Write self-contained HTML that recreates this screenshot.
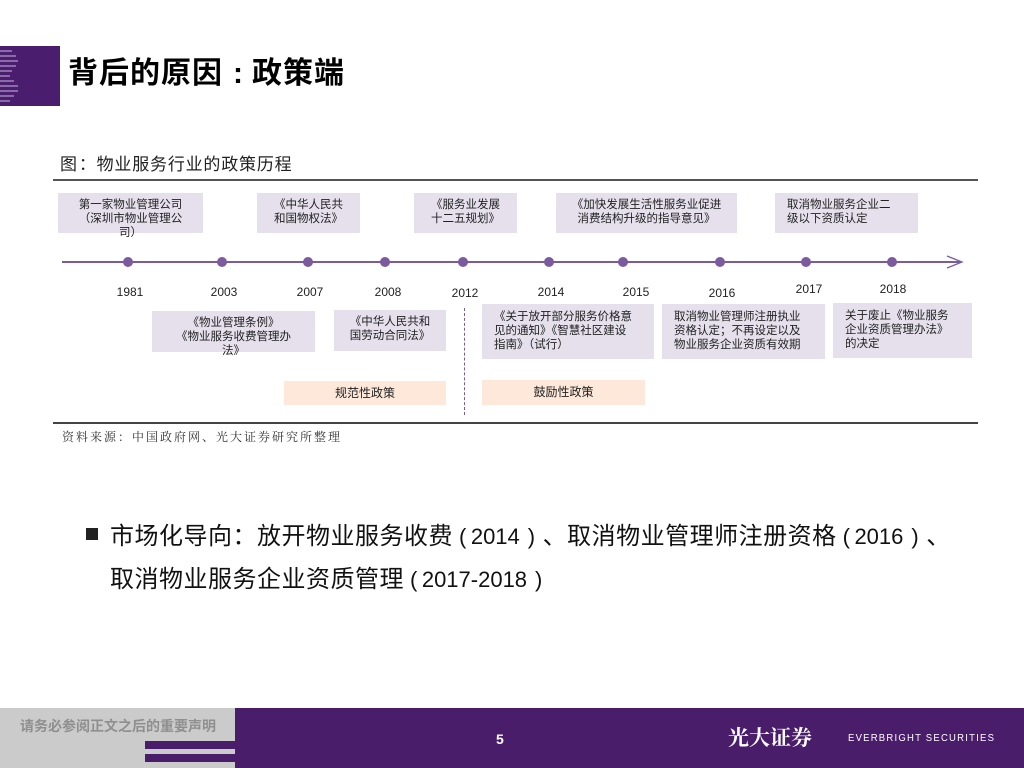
<!DOCTYPE html>
<html><head><meta charset="utf-8"><style>
*{margin:0;padding:0;box-sizing:border-box}
body{width:1024px;height:768px;background:#fff;position:relative;overflow:hidden;font-family:"Liberation Sans","Noto Sans CJK SC",sans-serif;color:#000}
.a{position:absolute}
.box{position:absolute;background:#e5e0ec;font-size:11.5px;line-height:14px;color:#222;text-align:center;padding-top:5px}
.or{position:absolute;background:#fde8da;font-size:12px;color:#222;text-align:center;line-height:25px}
.yr{position:absolute;font-size:12px;color:#222;width:40px;text-align:center}
.dot{position:absolute;width:10px;height:10px;border-radius:50%;background:#7b5a9e;top:257px}
.l{margin:0 4px 0 6px;font-size:22px}
.r{margin:0 7px 0 8px;font-size:22px}
.n{letter-spacing:0;font-size:22px}
</style></head><body>
<div class="a" style="left:0;top:46px;width:60px;height:60px;background:#4b1d6e"></div>
<svg class="a" style="left:0;top:46px" width="22" height="60">
<g fill="#8a6aa8"><rect x="0" y="4" width="12" height="2"/><rect x="0" y="9" width="16" height="2"/><rect x="0" y="14" width="18" height="2"/><rect x="0" y="19" width="16" height="2"/><rect x="0" y="24" width="12" height="2"/><rect x="0" y="29" width="10" height="2"/><rect x="0" y="34" width="14" height="2"/><rect x="0" y="39" width="18" height="2"/><rect x="0" y="44" width="18" height="2"/><rect x="0" y="49" width="14" height="2"/><rect x="0" y="54" width="10" height="2"/></g></svg>
<div class="a" style="left:68px;top:55px;font-size:30px;font-weight:bold;line-height:38px;letter-spacing:1px">背后的原因<span style="margin:0 8px 0 10px">:</span>政策端</div>
<div class="a" style="left:60px;top:155px;font-size:17px;line-height:20px;color:#222;letter-spacing:0.8px">图<span style="margin-left:1px">：</span>物业服务行业的政策历程</div>
<div class="a" style="left:53px;top:179px;width:925px;height:2px;background:#555"></div>

<div class="box" style="left:58px;top:193px;width:145px;height:40px">第一家物业管理公司<br>（深圳市物业管理公<br>司）</div>
<div class="box" style="left:257px;top:193px;width:103px;height:40px">《中华人民共<br>和国物权法》</div>
<div class="box" style="left:414px;top:193px;width:103px;height:40px">《服务业发展<br>十二五规划》</div>
<div class="box" style="left:556px;top:193px;width:181px;height:40px">《加快发展生活性服务业促进<br>消费结构升级的指导意见》</div>
<div class="box" style="left:775px;top:193px;width:143px;height:40px;text-align:left;padding-left:12px">取消物业服务企业二<br>级以下资质认定</div>

<div class="a" style="left:62px;top:261px;width:898px;height:1.5px;background:#7b5a9e"></div>
<svg class="a" style="left:945px;top:255px" width="20" height="14"><path d="M2 1 L17 7 L2 13" fill="none" stroke="#7b5a9e" stroke-width="1.3"/></svg>
<div class="dot" style="left:123px"></div><div class="dot" style="left:217px"></div><div class="dot" style="left:303px"></div><div class="dot" style="left:380px"></div><div class="dot" style="left:458px"></div><div class="dot" style="left:544px"></div><div class="dot" style="left:618px"></div><div class="dot" style="left:715px"></div><div class="dot" style="left:801px"></div><div class="dot" style="left:887px"></div>

<div class="yr" style="left:110px;top:285px">1981</div>
<div class="yr" style="left:204px;top:285px">2003</div>
<div class="yr" style="left:290px;top:285px">2007</div>
<div class="yr" style="left:368px;top:285px">2008</div>
<div class="yr" style="left:445px;top:286px">2012</div>
<div class="yr" style="left:531px;top:285px">2014</div>
<div class="yr" style="left:616px;top:285px">2015</div>
<div class="yr" style="left:702px;top:286px">2016</div>
<div class="yr" style="left:789px;top:282px">2017</div>
<div class="yr" style="left:873px;top:282px">2018</div>

<div class="box" style="left:152px;top:311px;width:163px;height:41px">《物业管理条例》<br>《物业服务收费管理办<br>法》</div>
<div class="box" style="left:334px;top:310px;width:112px;height:41px">《中华人民共和<br>国劳动合同法》</div>
<div class="box" style="left:482px;top:304px;width:172px;height:55px;text-align:left;padding-left:12px;padding-top:6px">《关于放开部分服务价格意<br>见的通知》《智慧社区建设<br>指南》（试行）</div>
<div class="box" style="left:662px;top:304px;width:163px;height:55px;text-align:left;padding-left:12px;padding-top:6px">取消物业管理师注册执业<br>资格认定；不再设定以及<br>物业服务企业资质有效期</div>
<div class="box" style="left:833px;top:303px;width:139px;height:55px;text-align:left;padding-left:12px;padding-top:6px">关于废止《物业服务<br>企业资质管理办法》<br>的决定</div>

<div class="or" style="left:284px;top:381px;width:162px;height:24px">规范性政策</div>
<div class="or" style="left:482px;top:380px;width:163px;height:25px">鼓励性政策</div>
<div class="a" style="left:464px;top:308px;height:107px;border-left:1.5px dashed #7b5a9e"></div>

<div class="a" style="left:53px;top:422px;width:925px;height:2px;background:#444"></div>
<div class="a" style="left:62px;top:429px;font-size:12px;line-height:16px;color:#333;letter-spacing:2px;font-family:'Liberation Serif','Noto Serif CJK SC',serif">资料来源：中国政府网、光大证券研究所整理</div>

<div class="a" style="left:86px;top:528px;width:12px;height:12px;background:#222"></div>
<div class="a" style="left:110px;top:515px;font-size:24px;line-height:43px;color:#111;white-space:nowrap;letter-spacing:0.5px">市场化导向：放开物业服务收费<span class="l">(</span><span class="n">2014</span><span class="r">)</span>、取消物业管理师注册资格<span class="l">(</span><span class="n">2016</span><span class="r">)</span>、<br>取消物业服务企业资质管理<span class="l">(</span><span class="n">2017-2018</span><span class="r">)</span></div>

<div class="a" style="left:0;top:708px;width:1024px;height:60px;background:#4a1d6b"></div>
<div class="a" style="left:0;top:708px;width:235px;height:60px;background:#cbcbcb"></div>
<div class="a" style="left:145px;top:741px;width:140px;height:8px;background:#4a1d6b"></div>
<div class="a" style="left:145px;top:754px;width:140px;height:8px;background:#4a1d6b"></div>
<div class="a" style="left:235px;top:718px;width:40px;height:6px;background:#4a1d6b"></div>
<div class="a" style="left:235px;top:729px;width:40px;height:7px;background:#4a1d6b"></div>
<div class="a" style="left:20px;top:716px;font-size:14px;font-weight:bold;color:#8f8f8f;line-height:20px">请务必参阅正文之后的重要声明</div>
<div class="a" style="left:496px;top:731px;font-size:14px;font-weight:bold;color:#fff">5</div>
<div class="a" style="left:728px;top:723px;font-size:21px;color:#fff;font-family:'Liberation Serif','Noto Serif CJK SC',serif;font-weight:bold;line-height:30px">光大证券</div>
<div class="a" style="left:848px;top:733px;font-size:10px;color:#fff;letter-spacing:1.3px;transform:scaleX(0.95);transform-origin:left">EVERBRIGHT SECURITIES</div>
</body></html>
